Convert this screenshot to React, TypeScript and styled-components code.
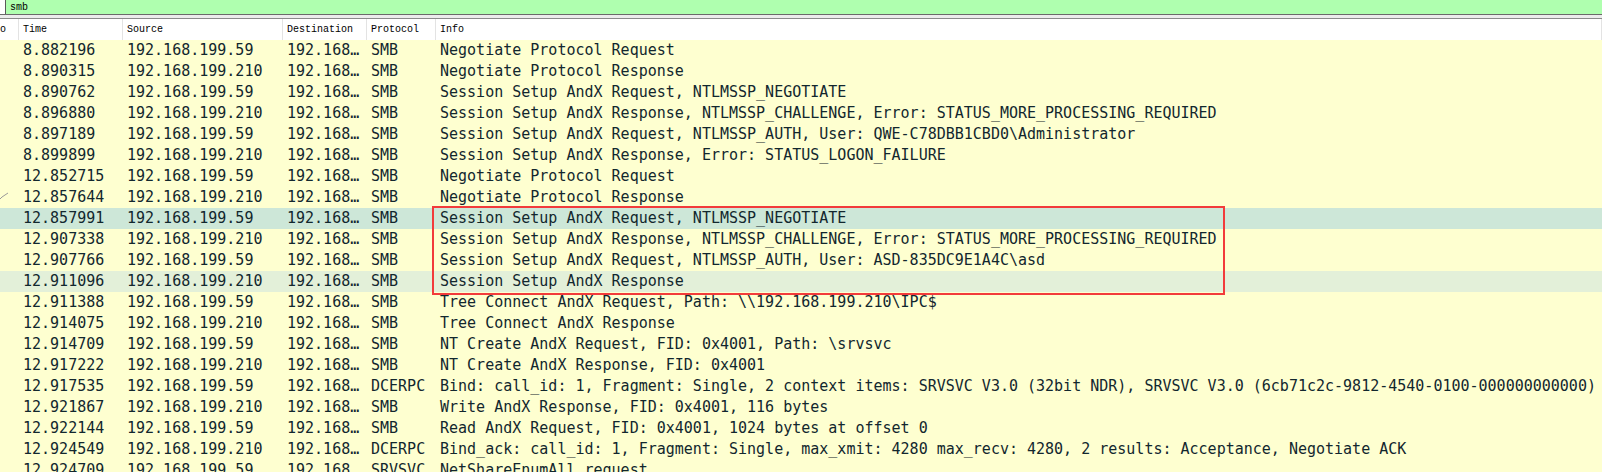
import React from "react";
import styled, { createGlobalStyle } from "styled-components";

const GlobalStyle = createGlobalStyle`
  html, body { margin: 0; padding: 0; background: #feffd0; overflow: hidden; }
  #root { width: 1602px; }
`;

const COLS = "19px 104px 160px 84px 69px 1fr";
const ROW_H = 21;

const Page = styled.div`
  display: flex;
  flex-direction: column;
  width: 1602px;
  height: 472px;
  overflow: hidden;
  background: #feffd0;
  & > * { flex-shrink: 0; }
`;

const FilterBar = styled.div`
  display: flex;
  height: 14px;
  background: #afffaf;
  border-bottom: 1px solid #6a6a6a;
`;

const FilterLeft = styled.div`
  width: 5px;
  background: #ffffff;
  border-right: 1px solid #5a5a5a;
`;

const FilterText = styled.div`
  padding-left: 4px;
  padding-top: 1px;
  font-family: "Liberation Mono", monospace;
  font-size: 10px;
  line-height: 14px;
  color: #000;
`;

const Splitter = styled.div`
  height: 3px;
  background: #ececec;
  border-bottom: 1px solid #8a8a8a;
`;

const HeaderRow = styled.div`
  display: grid;
  grid-template-columns: ${COLS};
  height: 21px;
  background: #ffffff;
`;

const HeaderCell = styled.div<{ $clip?: boolean }>`
  box-sizing: border-box;
  border-right: 1px solid #e3e3e3;
  padding-left: ${(p) => (p.$clip ? "0" : "4px")};
  font-family: "Liberation Mono", monospace;
  font-size: 10px;
  line-height: 22px;
  color: #000;
  white-space: nowrap;
  overflow: hidden;
  text-align: ${(p) => (p.$clip ? "right" : "left")};
  padding-right: ${(p) => (p.$clip ? "12px" : "0")};
  direction: ${(p) => (p.$clip ? "rtl" : "ltr")};
`;

const Body = styled.div`
  position: relative;
  display: flex;
  flex-direction: column;
  & > * { flex-shrink: 0; }
`;

const Row = styled.div<{ $bg: string }>`
  display: grid;
  grid-template-columns: ${COLS};
  height: ${ROW_H}px;
  background: ${(p) => p.$bg};
  color: #12272e;
  font-family: "DejaVu Sans Mono", monospace;
  font-size: 15px;
  line-height: ${ROW_H}px;
`;

const Cell = styled.div`
  padding-left: 4px;
  white-space: nowrap;
  overflow: hidden;
`;

const NoCell = styled.div`
  position: relative;
  overflow: hidden;
`;

const RelMark = styled.svg`
  position: absolute;
  left: 0;
  top: 5px;
`;

const Highlight = styled.div`
  position: absolute;
  left: 432px;
  top: ${8 * ROW_H - 2}px;
  width: 793px;
  height: ${4 * ROW_H + 5}px;
  box-sizing: border-box;
  border: 2px solid #f23b3b;
  pointer-events: none;
`;

type Pkt = [string, string, string, string, string?];

const rows: Pkt[] = [
  ["8.882196", "192.168.199.59", "SMB", "Negotiate Protocol Request"],
  ["8.890315", "192.168.199.210", "SMB", "Negotiate Protocol Response"],
  ["8.890762", "192.168.199.59", "SMB", "Session Setup AndX Request, NTLMSSP_NEGOTIATE"],
  ["8.896880", "192.168.199.210", "SMB", "Session Setup AndX Response, NTLMSSP_CHALLENGE, Error: STATUS_MORE_PROCESSING_REQUIRED"],
  ["8.897189", "192.168.199.59", "SMB", "Session Setup AndX Request, NTLMSSP_AUTH, User: QWE-C78DBB1CBD0\\Administrator"],
  ["8.899899", "192.168.199.210", "SMB", "Session Setup AndX Response, Error: STATUS_LOGON_FAILURE"],
  ["12.852715", "192.168.199.59", "SMB", "Negotiate Protocol Request"],
  ["12.857644", "192.168.199.210", "SMB", "Negotiate Protocol Response", "rel"],
  ["12.857991", "192.168.199.59", "SMB", "Session Setup AndX Request, NTLMSSP_NEGOTIATE", "sel"],
  ["12.907338", "192.168.199.210", "SMB", "Session Setup AndX Response, NTLMSSP_CHALLENGE, Error: STATUS_MORE_PROCESSING_REQUIRED"],
  ["12.907766", "192.168.199.59", "SMB", "Session Setup AndX Request, NTLMSSP_AUTH, User: ASD-835DC9E1A4C\\asd"],
  ["12.911096", "192.168.199.210", "SMB", "Session Setup AndX Response", "alt"],
  ["12.911388", "192.168.199.59", "SMB", "Tree Connect AndX Request, Path: \\\\192.168.199.210\\IPC$"],
  ["12.914075", "192.168.199.210", "SMB", "Tree Connect AndX Response"],
  ["12.914709", "192.168.199.59", "SMB", "NT Create AndX Request, FID: 0x4001, Path: \\srvsvc"],
  ["12.917222", "192.168.199.210", "SMB", "NT Create AndX Response, FID: 0x4001"],
  ["12.917535", "192.168.199.59", "DCERPC", "Bind: call_id: 1, Fragment: Single, 2 context items: SRVSVC V3.0 (32bit NDR), SRVSVC V3.0 (6cb71c2c-9812-4540-0100-000000000000)"],
  ["12.921867", "192.168.199.210", "SMB", "Write AndX Response, FID: 0x4001, 116 bytes"],
  ["12.922144", "192.168.199.59", "SMB", "Read AndX Request, FID: 0x4001, 1024 bytes at offset 0"],
  ["12.924549", "192.168.199.210", "DCERPC", "Bind_ack: call_id: 1, Fragment: Single, max_xmit: 4280 max_recv: 4280, 2 results: Acceptance, Negotiate ACK"],
  ["12.924709", "192.168.199.59", "SRVSVC", "NetShareEnumAll request"],
];

const bgFor = (flag?: string) =>
  flag === "sel" ? "#cde7d8" : flag === "alt" ? "#e3f0d9" : "#feffd0";

export default function App() {
  return (
    <>
      <GlobalStyle />
      <Page>
        <FilterBar>
          <FilterLeft />
          <FilterText>smb</FilterText>
        </FilterBar>
        <Splitter />
        <HeaderRow>
          <HeaderCell $clip>No.</HeaderCell>
          <HeaderCell>Time</HeaderCell>
          <HeaderCell>Source</HeaderCell>
          <HeaderCell>Destination</HeaderCell>
          <HeaderCell>Protocol</HeaderCell>
          <HeaderCell>Info</HeaderCell>
        </HeaderRow>
        <Body>
          {rows.map(([t, src, proto, info, flag], i) => (
            <Row key={i} $bg={bgFor(flag)}>
              <NoCell>
                {flag === "rel" && (
                  <RelMark width="10" height="8" viewBox="0 0 10 8">
                    <polyline points="0,7 2,5 8,1" fill="none" stroke="#9a9a9a" strokeWidth="1" />
                  </RelMark>
                )}
              </NoCell>
              <Cell>{t}</Cell>
              <Cell>{src}</Cell>
              <Cell>192.168…</Cell>
              <Cell>{proto}</Cell>
              <Cell>{info}</Cell>
            </Row>
          ))}
          <Highlight />
        </Body>
      </Page>
    </>
  );
}
